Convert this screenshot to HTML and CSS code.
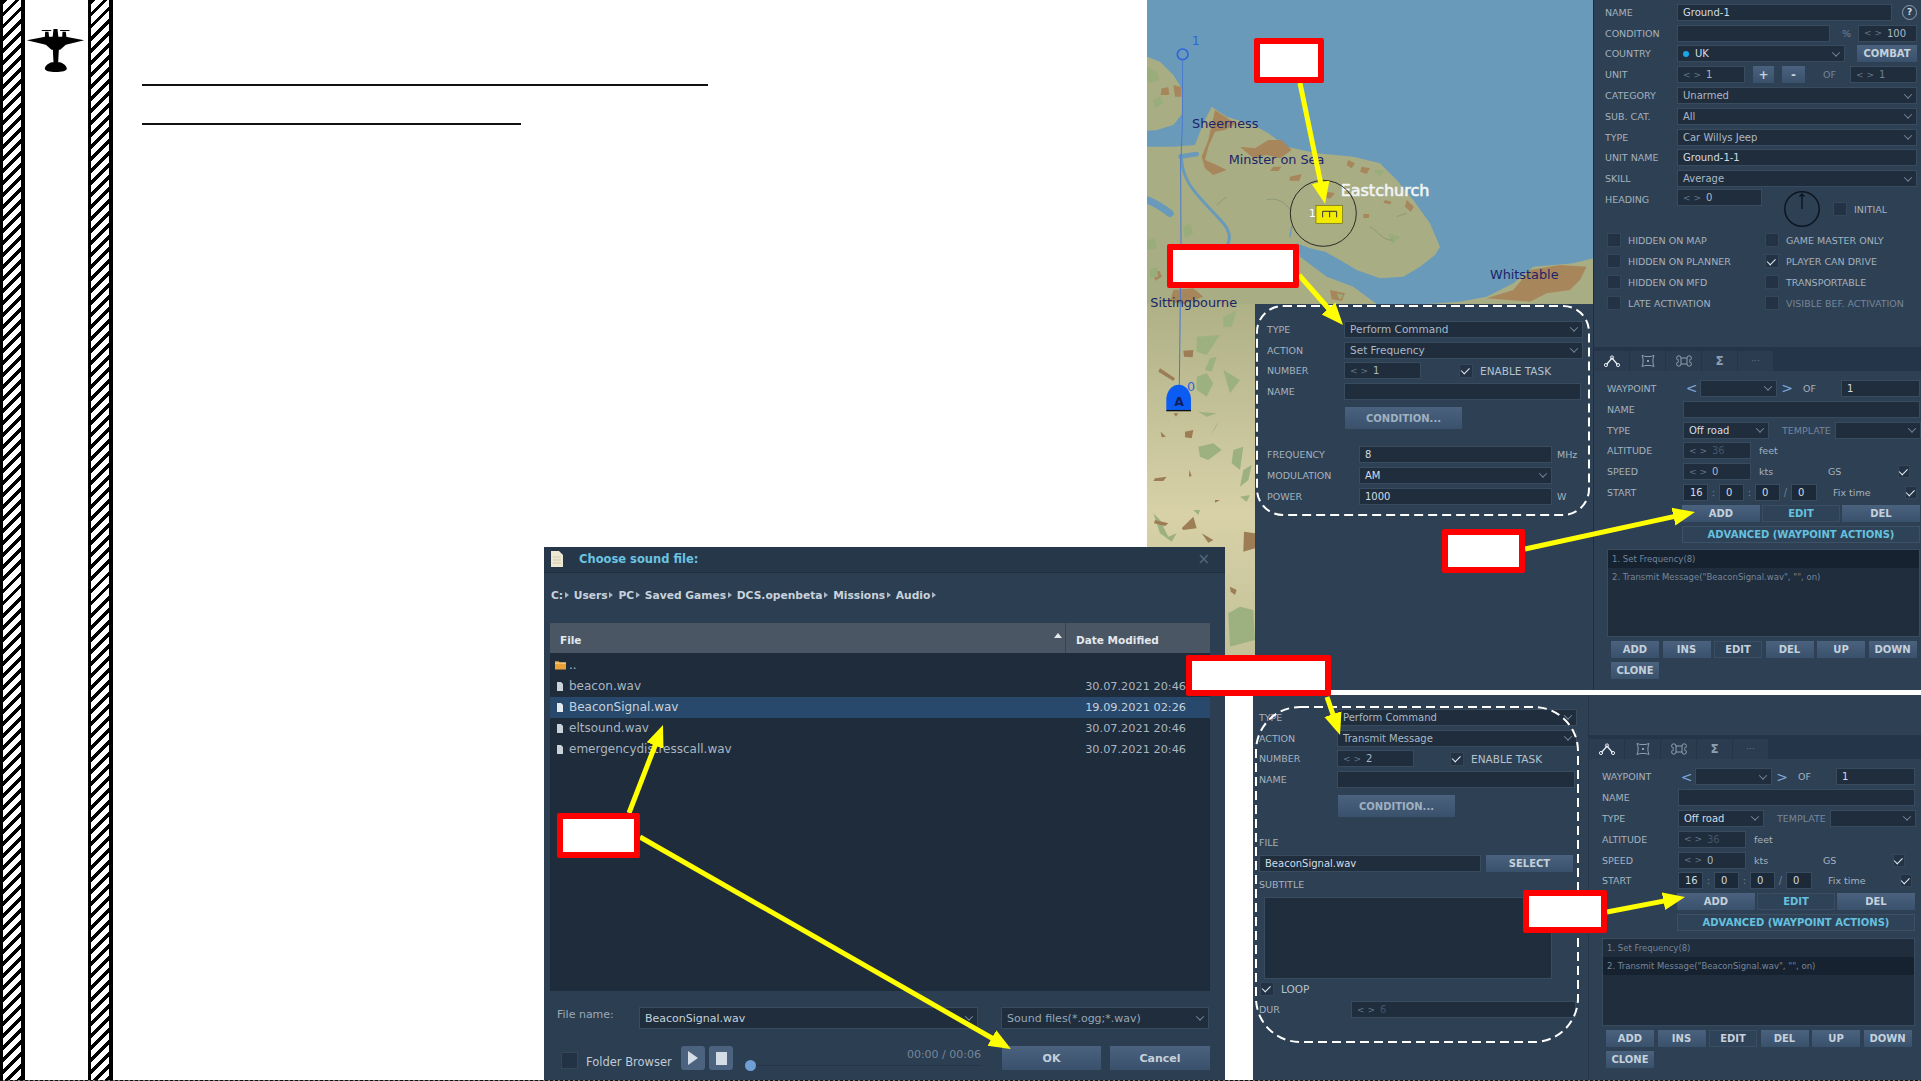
FILE: index.html
```html
<!DOCTYPE html>
<html lang="en">
<head>
<meta charset="utf-8">
<title>Choose sound file</title>
<link rel="stylesheet" href="styles.css">
</head>
<body>
<div class="slide">
  <div class="rail">
    <div class="stripe"></div>
    <div class="rail-mid">
      <svg class="plane" viewBox="78 85 176 135" aria-hidden="true">
        <path d="M125 91h28v3h-28zM180 91h28v3h-28z"/>
        <path d="M135 96h10l2 20h-13zM160 88h12l3 28h-18zM187 96h10l2 20h-13z"/>
        <path d="M80 122 135 111h62l55 11-55 13-17 15h-4l-2 38 4 0c12 2 22 12 22 19 0 6-15 10-33 10s-33-4-33-10c0-7 10-17 22-19l4 0-2-38h-4l-17-15z"/>
      </svg>
    </div>
    <div class="stripe"></div>
  </div>
  <div class="lines">
    <div class="rule rule-long"></div>
    <div class="rule rule-short"></div>
  </div>

  <svg class="map" viewBox="1147 0 446 690" aria-label="Map">
    <defs>
      <linearGradient id="lower" x1="0" y1="0" x2="0" y2="1">
        <stop offset="0" stop-color="#aeb086"/>
        <stop offset=".55" stop-color="#d8d1a8"/>
        <stop offset="1" stop-color="#bdbd93"/>
      </linearGradient>
    </defs>
    <rect x="1147" y="0" width="446" height="690" fill="#6a9aba"/>
    <rect x="1147" y="300" width="108" height="390" fill="url(#lower)"/>
    <g class="terrain" transform="translate(1140 0) scale(.3333)">
      <path fill="#a9ad84" d="M21 170 60 185 100 225 128 270 128 340 100 375 50 390 21 392Z"/>
      <path fill="#a9ad84" d="M21 440 100 440 165 435 190 370 215 320 260 350 340 375 385 400 440 440 530 460 640 470 720 490 770 540 820 600 870 670 900 740 885 765 840 800 790 830 720 835 650 810 600 780 555 755 510 745 470 730 480 770 560 830 640 860 710 912 21 912Z"/>
      <path fill="#a9ad84" d="M860 912 960 905 1040 890 1120 850 1180 800 1300 790 1360 775 1360 912Z"/>
      <g fill="none" stroke="#6a9aba" stroke-linecap="round">
        <path stroke-width="9" d="M125 480C130 560 190 600 250 670 275 700 270 720 262 735"/>
        <path stroke-width="22" d="M21 600C50 610 70 625 90 640"/>
        <path stroke-width="14" d="M122 470 170 462"/>
        <path stroke-width="4" d="M455 680 450 710"/>
      </g>
      <g fill="#a8865c">
        <path d="M225 330 270 360 290 370 255 390 225 395 205 440 195 480 230 495 260 510 220 525 195 505 185 470 205 420Z"/>
        <path d="M300 440 345 445 385 420 425 420 455 450 420 475 380 465 340 475Z"/>
        <path d="M400 500 425 500 415 513 390 513Z"/><path d="M450 530 485 522 478 542 448 542Z"/>
        <path d="M625 480 645 490 635 505 620 495Z"/><path d="M665 500 690 505 680 522 660 515Z"/>
        <path d="M560 575 585 580 570 596 548 590Z"/><path d="M670 642 688 642 686 654 670 654Z"/>
        <path d="M735 600 755 605 750 613 730 608Z"/><path d="M800 600 822 620 812 636 795 620Z"/>
        <path d="M1040 895 1120 870 1170 810 1260 795 1340 800 1320 840 1290 870 1220 880 1170 905Z"/>
        <path d="M65 265 85 262 88 285 62 285Z"/><path d="M100 255 125 262 124 290 105 290Z"/>
        <path d="M40 820 58 812 66 830 45 842Z"/><path d="M100 870 160 865 190 890 130 912 90 905Z"/>
        <path d="M570 870 615 880 606 903 575 898Z"/>
      </g>
      <g fill="#99ad7a">
        <path d="M21 200 50 215 60 240 30 250 21 240Z"/><path d="M40 300 60 290 70 310 45 325Z"/>
        <path d="M130 680 150 670 160 700 135 715Z"/><path d="M21 720 45 715 50 745 21 750Z"/>
        <path d="M30 810 50 800 55 830 30 835Z"/><path d="M700 510 735 510 720 530Z"/>
        <path d="M745 700 780 710 755 735Z"/><path d="M590 880 610 885 600 900Z"/>
      </g>
      <path fill="none" stroke="#7f8f70" stroke-width="2" d="M690 680C710 690 730 725 760 720M380 600C410 590 440 610 450 630M770 650 800 640M230 615 260 590"/>
    </g>
    <g class="terrain" transform="translate(1140 280) scale(.3333)">
      <g fill="#9db180">
        <path d="M170 170 240 165 200 225 170 215Z"/><path d="M210 235 230 230 215 275 195 270Z"/>
        <path d="M170 290 200 280 220 310 200 350 170 330Z"/><path d="M250 110 290 90 275 140 250 140Z"/>
        <path d="M225 440 240 420 210 470 205 480Z"/><path d="M175 500 220 490 245 510 205 540 180 530Z"/>
        <path d="M310 570 335 555 325 600 300 620Z"/><path d="M280 510 310 500 300 570 275 550Z"/>
        <path d="M175 395 230 400 200 410Z"/><path d="M300 650 330 645 320 665Z"/>
        <path d="M40 700 60 720 85 770 110 760 95 785 60 760Z"/><path d="M160 690 180 690 175 705Z"/>
        <path d="M265 1000 300 980 340 990 345 1080 270 1100Z"/><path d="M250 270 300 300 270 340Z"/>
      </g>
      <g fill="#9c7d55">
        <path d="M130 212 160 210 158 232 132 230Z"/><path d="M60 265 105 295 100 303 55 275Z"/>
        <path d="M135 455 160 450 155 475 135 472Z"/><path d="M62 455 78 470 65 472Z"/>
        <path d="M45 595 80 590 70 603 40 603Z"/><path d="M148 570 155 588 147 590Z"/>
        <path d="M45 720 85 730 75 738 42 730Z"/><path d="M125 745 160 710 170 745 130 750Z"/>
        <path d="M185 760 220 780 205 788Z"/><path d="M225 660 240 660 225 668Z"/>
        <path d="M312 755 345 760 345 805 310 815Z"/><path d="M100 400 115 400 108 410Z"/>
        <path d="M270 920 290 930 285 945 272 935Z"/>
      </g>
    </g>
    <g transform="translate(1140 0) scale(.3333)">
      <circle cx="128" cy="163" r="16" fill="none" stroke="#2c66d8" stroke-width="5"/>
      <path d="M128 178 127 380 122 490 123 730 118 1160" fill="none" stroke="#4a78d0" stroke-width="3"/>
      <text class="map-route" x="155" y="135">1</text>
      <text class="map-dark" x="156" y="383">Sheerness</text>
      <text class="map-dark" x="266" y="491">Minster on Sea</text>
      <text class="map-dark" x="1050" y="837">Whitstable</text>
      <text class="map-dark" x="31" y="922">Sittingbourne</text>
      <text class="map-white" x="602" y="587">Eastchurch</text>
      <circle cx="550" cy="640" r="99" fill="none" stroke="#111" stroke-width="2.500"/>
      <text class="map-one" x="506" y="650">1</text>
      <rect x="528" y="617" width="80" height="53" fill="#f2ea00" stroke="#6b6b10" stroke-width="2"/>
      <path d="M548 652V634H590V652M569 634V652" fill="none" stroke="#333" stroke-width="3"/>
      <path d="M79 1232V1200A37 46 0 0 1 153 1200V1232Z" fill="#0a5cf2"/>
      <path d="M79 1232H153" stroke="#111" stroke-width="4"/>
      <text class="map-a" x="103" y="1218">A</text>
      <text class="map-route" x="141" y="1172">0</text>
    </g>
  </svg>

  <section class="panel-side">
    <div class="form pad-side">
      <div class="row"><span class="lbl l77">TYPE</span><div class="box combo w239 roomy">Perform Command</div></div>
      <div class="row"><span class="lbl l77">ACTION</span><div class="box combo w239 roomy">Set Frequency</div></div>
      <div class="row"><span class="lbl l77">NUMBER</span><div class="box spin w77"><i>&lt; &gt;</i>1</div><span class="chk on ml38"></span><span class="lbl ml7 big">ENABLE TASK</span></div>
      <div class="row"><span class="lbl l77">NAME</span><div class="box w237"></div></div>
      <div class="row tall"><span class="lbl l77"></span><div class="btn cond">CONDITION...</div></div>
      <div class="row mt12"><span class="lbl l92">FREQUENCY</span><div class="box w193 value">8</div><span class="lbl ml5">MHz</span></div>
      <div class="row"><span class="lbl l92">MODULATION</span><div class="box combo w193 value">AM</div></div>
      <div class="row"><span class="lbl l92">POWER</span><div class="box w193 value">1000</div><span class="lbl ml5">W</span></div>
    </div>
  </section>

  <section class="panel-main">
    <div class="props">
      <div class="row"><span class="lbl l72">NAME</span><div class="box w215 value">Ground-1</div><span class="help">?</span></div>
      <div class="row"><span class="lbl l72">CONDITION</span><div class="box w153"></div><span class="lbl pct">%</span><div class="box spin w59"><i>&lt; &gt;</i>100</div></div>
      <div class="row"><span class="lbl l72">COUNTRY</span><div class="box combo w168 value"><b class="dot"></b>UK</div><div class="btn combat">COMBAT</div></div>
      <div class="row"><span class="lbl l72">UNIT</span><div class="box spin w68"><i>&lt; &gt;</i>1</div><div class="btn plus">+</div><div class="btn minus">-</div><span class="lbl dim of">OF</span><div class="box spin w67 dim"><i>&lt; &gt;</i>1</div></div>
      <div class="row"><span class="lbl l72">CATEGORY</span><div class="box combo w240">Unarmed</div></div>
      <div class="row"><span class="lbl l72">SUB. CAT.</span><div class="box combo w240">All</div></div>
      <div class="row"><span class="lbl l72">TYPE</span><div class="box combo w240">Car Willys Jeep</div></div>
      <div class="row"><span class="lbl l72">UNIT NAME</span><div class="box w240 value">Ground-1-1</div></div>
      <div class="row"><span class="lbl l72">SKILL</span><div class="box combo w240">Average</div></div>
      <div class="row top"><span class="lbl l72 heading">HEADING</span><div class="box spin w85"><i>&lt; &gt;</i>0</div>
        <svg class="dial" viewBox="0 0 36 36" aria-hidden="true"><circle cx="18" cy="18" r="17.200" fill="none" stroke="#0d1520" stroke-width="1.500"/><path d="M18 18V3M15.500 5.500 18 3l2.500 2.500" fill="none" stroke="#0d1520" stroke-width="1.400"/></svg>
        <span class="chk initial"></span><span class="lbl ml7 initial-l">INITIAL</span></div>
    </div>
    <div class="checks">
      <div class="ck"><span class="chk"></span><span class="lbl">HIDDEN ON MAP</span></div>
      <div class="ck"><span class="chk"></span><span class="lbl">GAME MASTER ONLY</span></div>
      <div class="ck"><span class="chk"></span><span class="lbl">HIDDEN ON PLANNER</span></div>
      <div class="ck"><span class="chk on"></span><span class="lbl">PLAYER CAN DRIVE</span></div>
      <div class="ck"><span class="chk"></span><span class="lbl">HIDDEN ON MFD</span></div>
      <div class="ck"><span class="chk"></span><span class="lbl">TRANSPORTABLE</span></div>
      <div class="ck"><span class="chk"></span><span class="lbl">LATE ACTIVATION</span></div>
      <div class="ck"><span class="chk"></span><span class="lbl faded">VISIBLE BEF. ACTIVATION</span></div>
    </div>
    <div class="wp wp-first">
      <div class="tabs">
        <div class="tab"><svg viewBox="0 0 18 14"><path d="M3.500 10.500 9 4l5.500 6.500" fill="none" stroke="#e4ecf2" stroke-width="1.300"/><circle cx="9" cy="3.500" r="1.600" fill="none" stroke="#e4ecf2"/><circle cx="3" cy="11" r="1.600" fill="none" stroke="#e4ecf2"/><circle cx="15" cy="11" r="1.600" fill="none" stroke="#e4ecf2"/></svg></div>
        <div class="tab"><svg viewBox="0 0 18 14"><path d="M3 1.500C6 3 12 3 15 1.500 13.500 5 13.500 9 15 12.500 12 11 6 11 3 12.500 4.500 9 4.500 5 3 1.500Z" fill="none" stroke="#8ea0b0"/><rect x="8" y="6" width="2" height="2" fill="#8ea0b0"/></svg></div>
        <div class="tab"><svg viewBox="0 0 18 14"><path d="M6 4h6v6H6zM6 4a2.200 2.200 0 1 0-2 2.200M12 4a2.200 2.200 0 1 1 2 2.200M6 10a2.200 2.200 0 1 1-2-2.200M12 10a2.200 2.200 0 1 0 2-2.200" fill="none" stroke="#8ea0b0"/></svg></div>
        <div class="tab sigma">Σ</div>
        <div class="tab more">···</div>
      </div>
      <div class="wp-body">
        <div class="row"><span class="lbl l76">WAYPOINT</span><span class="nav">&lt;</span><div class="box combo w77"></div><span class="nav navr">&gt;</span><span class="lbl wp-of">OF</span><div class="box w79 value">1</div></div>
        <div class="row"><span class="lbl l76">NAME</span><div class="box w237"></div></div>
        <div class="row"><span class="lbl l76">TYPE</span><div class="box combo w86 value">Off road</div><span class="lbl dim tpl">TEMPLATE</span><div class="box combo w86"></div></div>
        <div class="row"><span class="lbl l76">ALTITUDE</span><div class="box spin w68 dimmer"><i>&lt; &gt;</i>36</div><span class="lbl ml8">feet</span></div>
        <div class="row"><span class="lbl l76">SPEED</span><div class="box spin w68"><i>&lt; &gt;</i>0</div><span class="lbl kts">kts</span><span class="lbl gs">GS</span><span class="chk on small"></span></div>
        <div class="row"><span class="lbl l76">START</span><div class="box t w25">16</div><span class="sep">:</span><div class="box t w25">0</div><span class="sep">:</span><div class="box t w25">0</div><span class="sep">/</span><div class="box t w26">0</div><span class="lbl fix">Fix time</span><span class="chk on small"></span></div>
        <div class="row indent"><div class="btn b78">ADD</div><div class="btn b78 dark cyan">EDIT</div><div class="btn b78">DEL</div></div>
        <div class="row indent"><div class="btn adv">ADVANCED (WAYPOINT ACTIONS)</div></div>
        <div class="list"><div class="item sel">1. Set Frequency(8)</div><div class="item">2. Transmit Message("BeaconSignal.wav", "", on)</div></div>
        <div class="btn-row"><div class="btn b48">ADD</div><div class="btn b48">INS</div><div class="btn b48 dark">EDIT</div><div class="btn b48">DEL</div><div class="btn b48">UP</div><div class="btn b48">DOWN</div></div>
        <div class="btn-row"><div class="btn b48">CLONE</div></div>
      </div>
    </div>
  </section>

  <div class="band"></div>

  <section class="panel-side2">
    <div class="form pad-side2">
      <div class="row"><span class="lbl l78">TYPE</span><div class="box combo w240">Perform Command</div></div>
      <div class="row"><span class="lbl l78">ACTION</span><div class="box combo w240">Transmit Message</div></div>
      <div class="row"><span class="lbl l78">NUMBER</span><div class="box spin w77"><i>&lt; &gt;</i>2</div><span class="chk on ml36"></span><span class="lbl ml7 big">ENABLE TASK</span></div>
      <div class="row"><span class="lbl l78">NAME</span><div class="box w238"></div></div>
      <div class="row tall"><span class="lbl l78"></span><div class="btn cond">CONDITION...</div></div>
      <div class="row mt12"><span class="lbl">FILE</span></div>
      <div class="row"><div class="box w222 value">BeaconSignal.wav</div><div class="btn select">SELECT</div></div>
      <div class="row"><span class="lbl">SUBTITLE</span></div>
      <div class="textarea"></div>
      <div class="row"><span class="chk on ml1"></span><span class="lbl ml7 big">LOOP</span></div>
      <div class="row"><span class="lbl l92">DUR</span><div class="box spin w225 dimmer"><i>&lt; &gt;</i>6</div></div>
    </div>
  </section>

  <section class="panel-main2">
    <div class="wp">
      <div class="tabs">
        <div class="tab"><svg viewBox="0 0 18 14"><path d="M3.500 10.500 9 4l5.500 6.500" fill="none" stroke="#e4ecf2" stroke-width="1.300"/><circle cx="9" cy="3.500" r="1.600" fill="none" stroke="#e4ecf2"/><circle cx="3" cy="11" r="1.600" fill="none" stroke="#e4ecf2"/><circle cx="15" cy="11" r="1.600" fill="none" stroke="#e4ecf2"/></svg></div>
        <div class="tab"><svg viewBox="0 0 18 14"><path d="M3 1.500C6 3 12 3 15 1.500 13.500 5 13.500 9 15 12.500 12 11 6 11 3 12.500 4.500 9 4.500 5 3 1.500Z" fill="none" stroke="#8ea0b0"/><rect x="8" y="6" width="2" height="2" fill="#8ea0b0"/></svg></div>
        <div class="tab"><svg viewBox="0 0 18 14"><path d="M6 4h6v6H6zM6 4a2.200 2.200 0 1 0-2 2.200M12 4a2.200 2.200 0 1 1 2 2.200M6 10a2.200 2.200 0 1 1-2-2.200M12 10a2.200 2.200 0 1 0 2-2.200" fill="none" stroke="#8ea0b0"/></svg></div>
        <div class="tab sigma">Σ</div>
        <div class="tab more">···</div>
      </div>
      <div class="wp-body">
        <div class="row"><span class="lbl l76">WAYPOINT</span><span class="nav">&lt;</span><div class="box combo w77"></div><span class="nav navr">&gt;</span><span class="lbl wp-of">OF</span><div class="box w79 value">1</div></div>
        <div class="row"><span class="lbl l76">NAME</span><div class="box w237"></div></div>
        <div class="row"><span class="lbl l76">TYPE</span><div class="box combo w86 value">Off road</div><span class="lbl dim tpl">TEMPLATE</span><div class="box combo w86"></div></div>
        <div class="row"><span class="lbl l76">ALTITUDE</span><div class="box spin w68 dimmer"><i>&lt; &gt;</i>36</div><span class="lbl ml8">feet</span></div>
        <div class="row"><span class="lbl l76">SPEED</span><div class="box spin w68"><i>&lt; &gt;</i>0</div><span class="lbl kts">kts</span><span class="lbl gs">GS</span><span class="chk on small"></span></div>
        <div class="row"><span class="lbl l76">START</span><div class="box t w25">16</div><span class="sep">:</span><div class="box t w25">0</div><span class="sep">:</span><div class="box t w25">0</div><span class="sep">/</span><div class="box t w26">0</div><span class="lbl fix">Fix time</span><span class="chk on small"></span></div>
        <div class="row indent"><div class="btn b78">ADD</div><div class="btn b78 dark cyan">EDIT</div><div class="btn b78">DEL</div></div>
        <div class="row indent"><div class="btn adv">ADVANCED (WAYPOINT ACTIONS)</div></div>
        <div class="list"><div class="item">1. Set Frequency(8)</div><div class="item sel">2. Transmit Message("BeaconSignal.wav", "", on)</div></div>
        <div class="btn-row"><div class="btn b48">ADD</div><div class="btn b48">INS</div><div class="btn b48 dark">EDIT</div><div class="btn b48">DEL</div><div class="btn b48">UP</div><div class="btn b48">DOWN</div></div>
        <div class="btn-row"><div class="btn b48">CLONE</div></div>
      </div>
    </div>
  </section>

  <section class="dialog">
    <header class="dlg-title">
      <svg class="doc" viewBox="0 0 14 16" aria-hidden="true"><path d="M1 0h8l4 4v12H1z" fill="#eee9d2"/><path d="M3 6h8M3 9h8M3 12h8" stroke="#cfc9ae"/></svg>
      <span class="dlg-name">Choose sound file:</span>
      <span class="dlg-close">×</span>
    </header>
    <div class="crumbs"><span>C:</span><i></i><span>Users</span><i></i><span>PC</span><i></i><span>Saved Games</span><i></i><span>DCS.openbeta</span><i></i><span>Missions</span><i></i><span>Audio</span><i></i></div>
    <div class="thead"><div class="th-file">File<b class="sort"></b></div><div class="th-date">Date Modified</div></div>
    <div class="tbody">
      <div class="tr"><svg class="folder" viewBox="0 0 12 10" aria-hidden="true"><path d="M0 1h4l1 1h7v8H0z" fill="#e8a23c"/><path d="M0 3h12" stroke="#f8dc9a"/></svg><span class="fname up">..</span></div>
      <div class="tr"><svg class="fileic" viewBox="0 0 6 9" aria-hidden="true"><path d="M0 0h4l2 2v7H0z" fill="#cbd3da"/></svg><span class="fname">beacon.wav</span><span class="fdate">30.07.2021 20:46</span></div>
      <div class="tr picked"><svg class="fileic" viewBox="0 0 6 9" aria-hidden="true"><path d="M0 0h4l2 2v7H0z" fill="#e6ebef"/></svg><span class="fname">BeaconSignal.wav</span><span class="fdate">19.09.2021 02:26</span></div>
      <div class="tr"><svg class="fileic" viewBox="0 0 6 9" aria-hidden="true"><path d="M0 0h4l2 2v7H0z" fill="#cbd3da"/></svg><span class="fname">eltsound.wav</span><span class="fdate">30.07.2021 20:46</span></div>
      <div class="tr"><svg class="fileic" viewBox="0 0 6 9" aria-hidden="true"><path d="M0 0h4l2 2v7H0z" fill="#cbd3da"/></svg><span class="fname">emergencydistresscall.wav</span><span class="fdate">30.07.2021 20:46</span></div>
    </div>
    <div class="dlg-row1">
      <span class="fn-label">File name:</span>
      <div class="box combo fn-input">BeaconSignal.wav</div>
      <div class="box combo fn-filter">Sound files(*.ogg;*.wav)</div>
    </div>
    <div class="dlg-row2">
      <span class="chk folder-chk"></span><span class="folder-l">Folder Browser</span>
      <div class="btn media"><svg viewBox="0 0 10 14" aria-hidden="true"><path d="M0 0 10 7 0 14z" fill="#d4dde6"/></svg></div>
      <div class="btn media"><span class="stop"></span></div>
      <div class="player"><span class="time">00:00 / 00:06</span><div class="track"><b class="thumb"></b></div></div>
      <div class="btn dlg-btn ok">OK</div>
      <div class="btn dlg-btn">Cancel</div>
    </div>
  </section>

  <svg class="overlay" viewBox="0 0 1921 1081" aria-hidden="true">
    <defs>
      <marker id="head" markerUnits="userSpaceOnUse" markerWidth="24" markerHeight="20" refX="12" refY="10" orient="auto"><path d="M0 1 22 10 0 19z" fill="#ffff00"/></marker>
    </defs>
    <rect class="dash" x="1257" y="306" width="332" height="209" rx="26"/>
    <rect class="dash" x="1256" y="707" width="322" height="335" rx="44"/>
    <g class="arrows">
      <line x1="1300" y1="83" x2="1323" y2="194" marker-end="url(#head)"/>
      <line x1="1299" y1="275" x2="1336.400" y2="317.500" marker-end="url(#head)"/>
      <line x1="1525" y1="549" x2="1685.200" y2="514.100" marker-end="url(#head)"/>
      <line x1="1327" y1="697" x2="1336.800" y2="725.500" marker-end="url(#head)"/>
      <line x1="1607" y1="912" x2="1675.200" y2="898.900" marker-end="url(#head)"/>
      <line x1="629" y1="813" x2="659.400" y2="734.300" marker-end="url(#head)"/>
      <line x1="640" y1="837" x2="1002.300" y2="1044" marker-end="url(#head)"/>
    </g>
  </svg>
  <div class="callout c1"></div>
  <div class="callout c2"></div>
  <div class="callout c3"></div>
  <div class="callout c4"></div>
  <div class="callout c5"></div>
  <div class="callout c6"></div>
  <div class="edge"></div>
</div>
</body>
</html>
```
FILE: styles.css
```css
* { box-sizing: border-box; }
html, body { margin: 0; padding: 0; background: #fff; }
body { width: 1921px; height: 1081px; overflow: hidden; font-family: "DejaVu Sans", sans-serif; font-size: 10px; color: #c3ced8; }
.slide { position: relative; width: 1921px; height: 1081px; overflow: hidden; background: #fff; }

/* left rail */
.rail { display: flex; height: 1081px; width: 113px; }
.stripe { width: 25px; height: 100%; border-left: 3px solid #000; border-right: 4px solid #000; background: repeating-linear-gradient(135deg, #000 0 3.500px, #fff 3.500px 8.500px); }
.rail-mid { width: 63px; padding: 28px 0 0 1px; }
.plane { display: block; width: 59px; height: 45px; }
.lines { position: absolute; left: 142px; top: 84px; display: flex; flex-direction: column; gap: 37px; }
.rule { height: 2px; background: #111; }
.rule-long { width: 566px; }
.rule-short { width: 379px; }

/* map */
.map { position: absolute; left: 1147px; top: 0; width: 446px; height: 690px; display: block; }
.terrain { filter: blur(.5px); }
.map-dark { font: 38.500px "DejaVu Sans", sans-serif; fill: #1c2468; }
.map-white { font: 48px "DejaVu Sans", sans-serif; fill: #fff; stroke: #e8eeee; stroke-width: 2px; }
.map-route { font: 38px "DejaVu Sans", sans-serif; fill: #2c66d8; }
.map-one { font: 34px "DejaVu Sans", sans-serif; fill: #fff; }
.map-a { font: bold 38px "DejaVu Sans", sans-serif; fill: #11205c; }

/* panels */
.panel-side, .panel-side2, .panel-main, .panel-main2 { position: absolute; background: #2d4054; }
.panel-side { left: 1255px; top: 304px; width: 338px; height: 386px; }
.panel-side2 { left: 1253px; top: 695px; width: 335px; height: 386px; }
.panel-main { left: 1593px; top: 0; width: 328px; height: 690px; border-left: 1px solid #1f2d3c; }
.panel-main2 { left: 1588px; top: 695px; width: 333px; height: 386px; padding-top: 40px; border-left: 1px solid #263749; overflow: hidden; }
.band { position: absolute; left: 1331px; top: 690px; width: 590px; height: 5px; background: #fff; }
.pad-side { padding: 15px 0 0 12px; }
.pad-side2 { padding: 12px 0 0 6px; }
.props { padding: 2px 0 0 11px; }

.row { display: flex; align-items: center; height: 20.8px; flex: none; }
.row.tall { height: 30px; padding-top: 2px; }
.row.top { align-items: flex-start; }
.row.indent { padding-left: 75px; }
.mt12 { margin-top: 12px; }
.lbl { color: #a5b2bf; font-size: 9.500px; white-space: nowrap; flex: none; }
.lbl.big { font-size: 10.500px; color: #b6c2cd; }
.lbl.dim { color: #76869a; }
.lbl.faded { color: #76869a; }
.l72 { width: 72px; }
.l76 { width: 76px; }
.l77 { width: 77px; }
.l78 { width: 78px; }
.l92 { width: 92px; }
.heading { margin-top: 5px; }

.box { height: 17px; display: flex; align-items: center; padding: 0 5px; background: #1f2d3d; border: 1px solid #394b5f; color: #abb8c4; font-size: 10px; white-space: nowrap; flex: none; }
.box.roomy { font-size: 10.500px; }
.value { color: #d3dce4; }
.dim { color: #6f8093; }
.box.dimmer { color: #44556a; }
.combo::after { content: ""; margin-left: auto; width: 5px; height: 5px; border-right: 1px solid #76869a; border-bottom: 1px solid #76869a; transform: rotate(45deg) translate(-1px, -1px); flex: none; }
.spin i { font-style: normal; font-size: 9px; color: #65768a; margin-right: 5px; }
.w25 { width: 25px; } .w26 { width: 26px; } .w59 { width: 59px; } .w67 { width: 67px; } .w68 { width: 68px; }
.w77 { width: 77px; } .w79 { width: 79px; } .w85 { width: 85px; } .w86 { width: 86px; } .w153 { width: 153px; }
.w168 { width: 168px; } .w193 { width: 193px; } .w215 { width: 215px; } .w222 { width: 222px; } .w225 { width: 225px; }
.w237 { width: 237px; } .w238 { width: 238px; } .w239 { width: 239px; } .w240 { width: 240px; }
.ml1 { margin-left: 1px; } .ml5 { margin-left: 5px; } .ml7 { margin-left: 7px; } .ml8 { margin-left: 8px; } .ml36 { margin-left: 36px; } .ml38 { margin-left: 38px; }

.chk { width: 14px; height: 14px; flex: none; background: #233345; border: 1px solid #33465a; display: inline-flex; align-items: center; justify-content: center; }
.chk.on::after { content: ""; width: 7px; height: 4px; border-left: 1.500px solid #e6edf3; border-bottom: 1.500px solid #e6edf3; transform: rotate(-45deg) translate(0, -1px); }
.chk.small { width: 12px; height: 13px; }

.btn { display: flex; align-items: center; justify-content: center; height: 17px; flex: none; background: linear-gradient(#4a627e, #3a516c); color: #c4d1dc; font-size: 10px; font-weight: bold; white-space: nowrap; }
.btn.dark { background: #2f4358; border: 1px solid #3a4d62; }
.btn.cyan, .btn.adv { color: #66c1df; }
.btn.cond { width: 117px; height: 22px; margin-left: 1px; color: #9fb0c0; }
.help { width: 15px; height: 15px; margin-left: 10px; border: 1px solid #8fa0b0; border-radius: 50%; font-size: 9px; font-weight: bold; display: flex; align-items: center; justify-content: center; color: #d3dce4; flex: none; }
.pct { margin-left: 12px; width: 16px; color: #6f8093; }
.dot { width: 6px; height: 6px; background: #19a7e8; border-radius: 50%; margin-right: 6px; }
.combat { width: 60px; margin-left: 12px; font-size: 10px; }
.plus { width: 21px; margin-left: 8px; font-size: 12px; }
.minus { width: 23px; margin-left: 8px; font-size: 12px; }
.of { margin-left: 18px; width: 27px; }
.dial { width: 36px; height: 36px; margin: 2px 0 0 22px; flex: none; }
.initial { margin: 13px 0 0 13px; }
.initial-l { margin-top: 15px; }
.select { width: 87px; margin-left: 5px; }
.textarea { width: 288px; height: 82px; margin: 2px 0 0 5px; background: #1f2d3d; border: 1px solid #394b5f; }

.checks { display: grid; grid-template-columns: 158px 1fr; grid-auto-rows: 20.900px; align-items: center; margin: 20px 0 0 13px; }
.ck { display: flex; align-items: center; gap: 7px; }

/* waypoint block */
.wp-first { margin-top: 33px; }
.tabs { display: flex; align-items: flex-end; height: 24px; background: #24354a; }
.tab { width: 36px; height: 20px; display: flex; align-items: center; justify-content: center; background: #2b3c50; border-right: 1px solid #24354a; color: #8ea0b0; }
.tab svg { width: 18px; height: 14px; }
.sigma { font-weight: bold; font-size: 12px; }
.more { font-size: 9px; color: #62748a; }
.wp-body { padding: 7.500px 0 0 13px; }
.nav { width: 17px; color: #7fa8dd; font-size: 14px; flex: none; text-align: center; }
.navr { width: 20px; }
.wp-of { margin-left: 6px; width: 38px; }
.tpl { margin-left: 13px; width: 53px; }
.kts { margin-left: 8px; width: 69px; }
.gs { width: 70px; }
.fix { margin-left: 16px; width: 72px; }
.sep { width: 11px; text-align: center; color: #6f8093; flex: none; }
.t { padding: 0 6px; color: #d3dce4; background: #1c2939; }
.b78 { width: 78px; margin-right: 2px; }
.btn.adv { width: 238px; background: #2f4358; border: 1px solid #3d5066; }
.b48 { width: 48px; margin-right: 3.500px; }
.list { width: 313px; height: 88px; margin-top: 5px; background: #1f2d3d; border: 1px solid #394b5f; font-size: 8.500px; color: #76869a; }
.item { height: 18px; line-height: 18px; padding-left: 4px; white-space: nowrap; }
.item.sel { background: #172230; }
.btn-row { display: flex; margin: 4px 0 0 4px; }

/* dialog */
.dialog { position: absolute; left: 544px; top: 547px; width: 681px; height: 533px; background: #2b3e52; display: flex; flex-direction: column; }
.dlg-title { display: flex; align-items: center; height: 26px; flex: none; padding: 0 0 2px 6px; background: #263749; border-bottom: 1px solid #1f2e3e; }
.doc { width: 14px; height: 16px; flex: none; }
.dlg-name { margin-left: 15px; color: #6cc3e2; font-size: 11.500px; font-weight: bold; }
.dlg-close { margin-left: auto; margin-right: 15px; color: #56687c; font-size: 15px; }
.crumbs { height: 50px; padding: 0 0 6px 7px; display: flex; align-items: center; font-size: 10.700px; font-weight: bold; color: #c8d2dc; flex: none; }
.crumbs i { width: 0; height: 0; margin: 0 5.200px 0 1.500px; border-left: 4px solid #a9b6c3; border-top: 3px solid transparent; border-bottom: 3px solid transparent; }
.thead { display: flex; height: 30px; margin: 0 15px 0 6px; padding-top: 0; background: #4a5664; flex: none; font-weight: bold; font-size: 10.500px; color: #e2e8ee; }
.th-file { width: 516px; padding: 4px 0 0 10px; display: flex; align-items: center; border-right: 1px solid #364454; position: relative; }
.sort { position: absolute; right: 3px; top: 10px; border-left: 4px solid transparent; border-right: 4px solid transparent; border-bottom: 5px solid #e2e8ee; }
.th-date { flex: 1; padding: 4px 0 0 10px; display: flex; align-items: center; }
.tbody { height: 338px; margin: 0 15px 0 6px; padding-top: 1.500px; background: #1f2c3b; flex: none; }
.tr { display: flex; align-items: center; height: 21px; padding-left: 5px; color: #a9b6c2; font-size: 12px; }
.tr.picked { background: #29496c; color: #c4d2de; }
.folder { width: 11px; height: 10px; flex: none; }
.fileic { width: 6px; height: 9px; margin-left: 2px; flex: none; }
.fname { margin-left: 6px; }
.fname.up { margin-left: 3px; }
.fdate { margin-left: auto; margin-right: 24px; font-size: 11.300px; }
.dlg-row1 { display: flex; align-items: center; height: 22px; margin: 16px 0 0 13px; flex: none; }
.fn-label { width: 82px; margin-top: -8px; color: #9caab8; font-size: 11px; }
.box.fn-input { width: 339px; height: 22px; color: #c6d1db; font-size: 11px; }
.box.fn-filter { width: 208px; height: 22px; margin-left: 23px; color: #98a7b5; font-size: 11px; }
.dlg-row2 { display: flex; align-items: flex-start; height: 25px; margin: 17px 0 0 17px; flex: none; }
.chk.folder-chk { width: 17px; height: 17px; margin-top: 6px; }
.folder-l { margin: 9px 0 0 8px; width: 95px; color: #c0cbd6; font-size: 11.500px; white-space: nowrap; }
.btn.media { width: 24px; height: 24px; margin-right: 4px; border-radius: 3px; background: #4c637f; }
.media svg { width: 10px; height: 14px; }
.stop { width: 11px; height: 13px; background: #d4dde6; }
.player { width: 236px; height: 25px; margin: 0 21px 0 8px; display: flex; flex-direction: column; align-items: flex-end; }
.time { font-size: 11px; color: #76869a; height: 18px; line-height: 17px; }
.track { position: relative; width: 100%; height: 1px; margin-top: 1px; background: #243345; }
.thumb { position: absolute; left: 0; top: -5px; width: 11px; height: 11px; border-radius: 50%; background: #6f9fd4; }
.btn.dlg-btn { width: 100px; height: 24px; margin-right: 9px; font-size: 11px; }
.btn.ok { width: 99px; }

/* annotations */
.overlay { position: absolute; left: 0; top: 0; width: 1921px; height: 1081px; pointer-events: none; }
.dash { fill: none; stroke: #fff; stroke-width: 2; stroke-dasharray: 9 5; }
.arrows line { stroke: #ffff00; stroke-width: 5; }
.callout { position: absolute; background: #fff; border: 6px solid #f00; border-radius: 2px; }
.c1 { left: 1254px; top: 38px; width: 70px; height: 45px; }
.c2 { left: 1167px; top: 244px; width: 132px; height: 44px; }
.c3 { left: 1442px; top: 529px; width: 83px; height: 44px; }
.c4 { left: 1186px; top: 655px; width: 145px; height: 41px; }
.c5 { left: 1523px; top: 890px; width: 84px; height: 43px; }
.c6 { left: 557px; top: 813px; width: 83px; height: 45px; }
.edge { position: absolute; left: 0; bottom: 0; width: 1921px; height: 1px; background: repeating-linear-gradient(90deg, #111 0 3px, #777 3px 5px); }
```
